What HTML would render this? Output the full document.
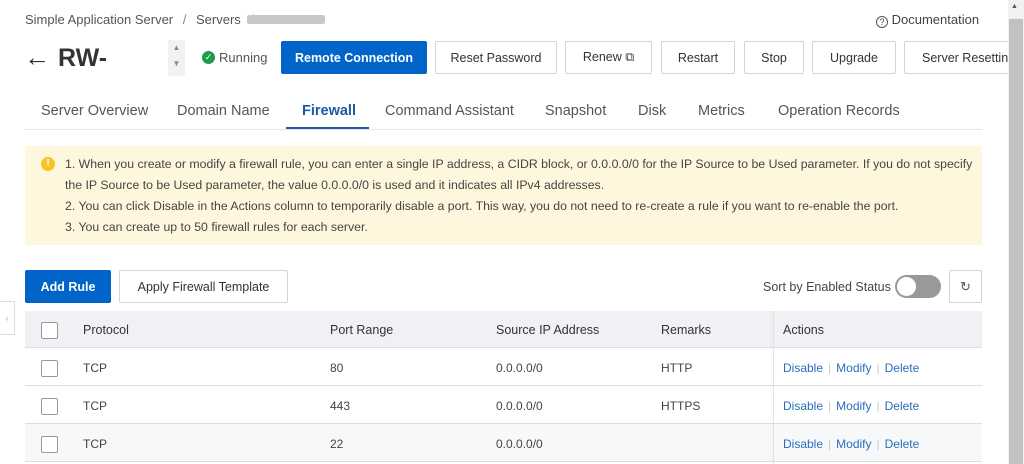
<!DOCTYPE html>
<html><head><meta charset="utf-8"><style>
*{box-sizing:border-box;margin:0;padding:0}
body{width:1024px;height:464px;overflow:hidden;background:#fff;font-family:"Liberation Sans",sans-serif;color:#333;position:relative}
.a{position:absolute}
.btn{position:absolute;top:41px;height:33px;border:1px solid #d4d4d4;background:#fff;font-size:12.5px;color:#333;display:flex;align-items:center;justify-content:center;border-radius:2px;white-space:nowrap;overflow:hidden}
.tab{position:absolute;top:103px;font-size:14.5px;color:#555}
.al{position:absolute;left:65px;font-size:12.3px;color:#444;white-space:nowrap}
.th{position:absolute;font-size:12.5px;color:#333}
.td{position:absolute;font-size:12px;color:#444}
.cb{position:absolute;left:41px;width:17px;height:17px;border:1px solid #999;border-radius:2px;background:#fff}
.lk{color:#2a6ebb}
.sep{color:#ccc;margin:0 5px}
</style></head><body>
<div class="a" style="left:25px;top:12px;font-size:13px;color:#555">Simple Application Server <span style="margin:0 6px;color:#888">/</span> Servers <span style="margin:0 6px;color:#888">/</span></div>
<div class="a" style="left:247px;top:15px;width:78px;height:9px;background:#c8c8c8;border-radius:2px"></div>
<div class="a" style="left:876px;top:12px;font-size:13px;color:#444"><span style="display:inline-block;width:12px;height:12px;border:1px solid #555;border-radius:50%;font-size:9px;text-align:center;line-height:11px;vertical-align:-1px">?</span> Documentation</div>
<div class="a" style="left:24px;top:42px;font-size:26px;color:#333">←</div>
<div class="a" style="left:58px;top:44px;font-size:25px;font-weight:bold;color:#333">RW-</div>
<div class="a" style="left:168px;top:40px;width:17px;height:36px;background:#f2f2f2;font-size:8px;color:#888;text-align:center;line-height:16px">▲<br>▼</div>
<div class="a" style="left:202px;top:51px;width:13px;height:13px;border-radius:50%;background:#1e9c4c;color:#fff;font-size:9px;text-align:center;line-height:13px">✓</div>
<div class="a" style="left:219px;top:50px;font-size:13px;color:#555">Running</div>
<div class="btn" style="left:281px;width:146px;background:#0064c8;border-color:#0064c8;color:#fff;font-weight:bold">Remote Connection</div>
<div class="btn" style="left:435px;width:122px">Reset Password</div>
<div class="btn" style="left:565px;width:87px">Renew ⧉</div>
<div class="btn" style="left:661px;width:74px">Restart</div>
<div class="btn" style="left:744px;width:60px">Stop</div>
<div class="btn" style="left:812px;width:84px">Upgrade</div>
<div class="btn" style="left:904px;width:110px;justify-content:flex-start;padding-left:17px">Server Resetting</div>
<div class="tab" style="left:41px">Server Overview</div>
<div class="tab" style="left:177px">Domain Name</div>
<div class="tab" style="left:302px;color:#1a5aa8;font-weight:bold">Firewall</div>
<div class="tab" style="left:385px">Command Assistant</div>
<div class="tab" style="left:545px">Snapshot</div>
<div class="tab" style="left:638px">Disk</div>
<div class="tab" style="left:698px">Metrics</div>
<div class="tab" style="left:778px">Operation Records</div>
<div class="a" style="left:25px;top:129px;width:957px;height:1px;background:#e6e6e6"></div>
<div class="a" style="left:286px;top:127px;width:83px;height:2px;background:#1a5aa8"></div>
<div class="a" style="left:25px;top:146px;width:957px;height:99px;background:#fff7dd"></div>
<div class="a" style="left:41px;top:157px;width:14px;height:14px;border-radius:50%;background:#f7c52a;color:#fff;font-size:10px;text-align:center;line-height:14px;font-weight:bold">!</div>
<div class="al" style="top:157px">1. When you create or modify a firewall rule, you can enter a single IP address, a CIDR block, or 0.0.0.0/0 for the IP Source to be Used parameter. If you do not specify</div>
<div class="al" style="top:178px">the IP Source to be Used parameter, the value 0.0.0.0/0 is used and it indicates all IPv4 addresses.</div>
<div class="al" style="top:199px">2. You can click Disable in the Actions column to temporarily disable a port. This way, you do not need to re-create a rule if you want to re-enable the port.</div>
<div class="al" style="top:220px">3. You can create up to 50 firewall rules for each server.</div>
<div class="btn" style="top:270px;left:25px;width:86px;height:33px;background:#0064c8;border-color:#0064c8;color:#fff;font-weight:bold">Add Rule</div>
<div class="btn" style="top:270px;left:119px;width:169px;height:33px">Apply Firewall Template</div>
<div class="a" style="left:763px;top:280px;font-size:12.5px;color:#444">Sort by Enabled Status</div>
<div class="a" style="left:895px;top:275px;width:46px;height:23px;border-radius:12px;background:#999"><div style="position:absolute;left:2px;top:2px;width:19px;height:19px;border-radius:50%;background:#fff"></div></div>
<div class="btn" style="top:270px;left:949px;width:33px;height:33px;font-size:13px;color:#555">↻</div>
<div class="a" style="left:0;top:301px;width:15px;height:34px;border:1px solid #ddd;border-left:none;font-size:9px;color:#aaa;text-align:center;line-height:32px">‹</div>
<div class="a" style="left:25px;top:311px;width:957px;height:37px;background:#eff1f5;border-bottom:1px solid #ddd"></div>
<div class="a" style="left:25px;top:348px;width:957px;height:38px;border-bottom:1px solid #ddd"></div>
<div class="a" style="left:25px;top:386px;width:957px;height:38px;border-bottom:1px solid #ddd"></div>
<div class="a" style="left:25px;top:424px;width:957px;height:38px;background:#f7f8fa;border-bottom:1px solid #ddd"></div>
<div class="a" style="left:773px;top:311px;width:1px;height:153px;background:#e2e2e2;box-shadow:-2px 0 3px rgba(0,0,0,.06)"></div>
<div class="cb" style="top:322px"></div><div class="cb" style="top:360px"></div><div class="cb" style="top:398px"></div><div class="cb" style="top:436px"></div>
<div class="th" style="left:83px;top:323px">Protocol</div>
<div class="th" style="left:330px;top:323px">Port Range</div>
<div class="th" style="left:496px;top:323px">Source IP Address</div>
<div class="th" style="left:661px;top:323px">Remarks</div>
<div class="th" style="left:783px;top:323px">Actions</div>
<div class="td" style="left:83px;top:361px">TCP</div><div class="td" style="left:330px;top:361px">80</div><div class="td" style="left:496px;top:361px">0.0.0.0/0</div><div class="td" style="left:661px;top:361px">HTTP</div>
<div class="td" style="left:83px;top:399px">TCP</div><div class="td" style="left:330px;top:399px">443</div><div class="td" style="left:496px;top:399px">0.0.0.0/0</div><div class="td" style="left:661px;top:399px">HTTPS</div>
<div class="td" style="left:83px;top:437px">TCP</div><div class="td" style="left:330px;top:437px">22</div><div class="td" style="left:496px;top:437px">0.0.0.0/0</div>
<div class="td lk" style="left:783px;top:361px">Disable<span class="sep">|</span>Modify<span class="sep">|</span>Delete</div>
<div class="td lk" style="left:783px;top:399px">Disable<span class="sep">|</span>Modify<span class="sep">|</span>Delete</div>
<div class="td lk" style="left:783px;top:437px">Disable<span class="sep">|</span>Modify<span class="sep">|</span>Delete</div>
<div class="a" style="left:1008px;top:0;width:16px;height:464px;background:#f1f1f1"></div>
<div class="a" style="left:1011px;top:3px;font-size:7px;color:#555">▲</div>
<div class="a" style="left:1009px;top:19px;width:14px;height:445px;background:#c1c1c1"></div>
</body></html>
